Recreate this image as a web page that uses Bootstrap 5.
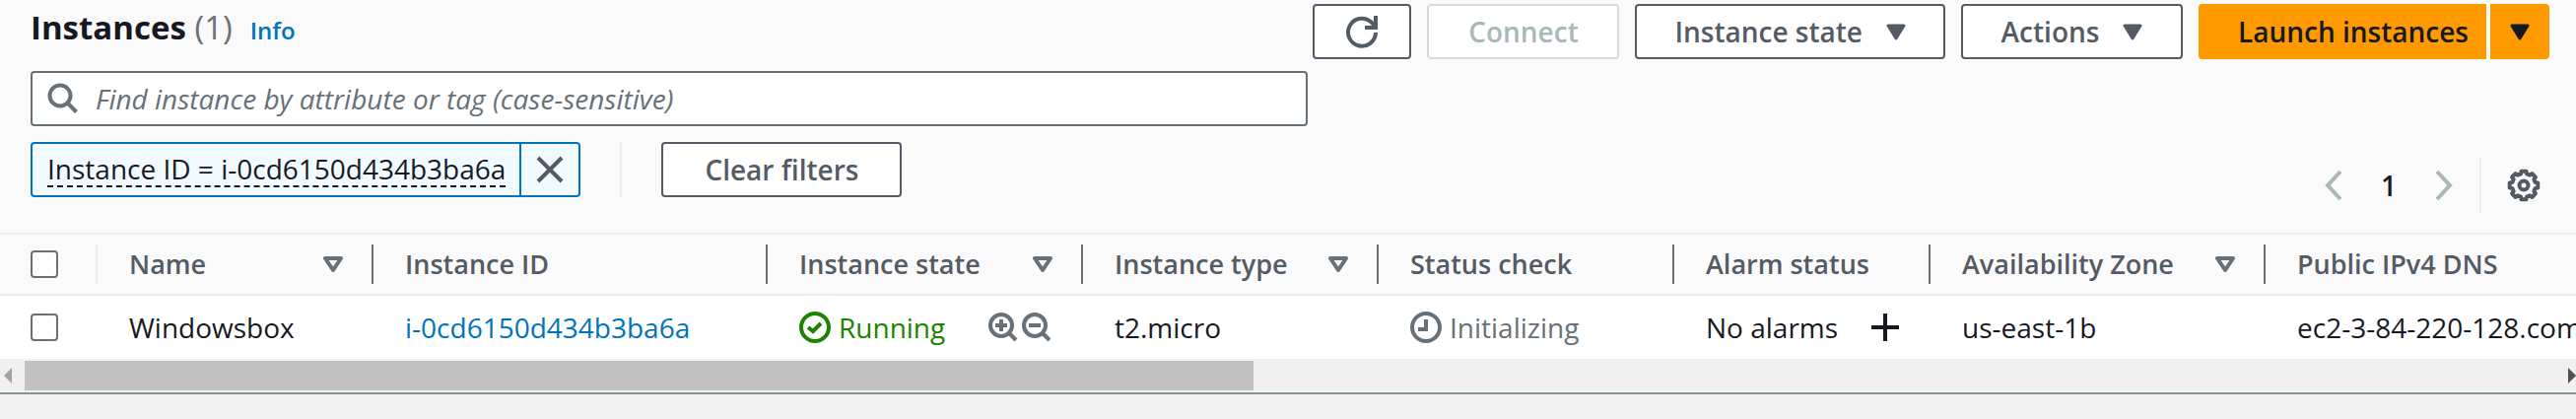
<!DOCTYPE html>
<html lang="en">
<head>
<meta charset="utf-8">
<meta name="viewport" content="width=device-width, initial-scale=1">
<title>Instances</title>
<link rel="stylesheet" href="https://cdn.jsdelivr.net/npm/bootstrap@5.3.0/dist/css/bootstrap.min.css">
<style>
  body { background: #f2f2f2; color: #16191f; font: 400 28px/36px "Open Sans", "Noto Sans", sans-serif; }
  a { color: #0073bb; text-decoration: none; }
  svg { display: block; flex: none; fill: none; stroke: currentColor; }
  .panel { background: #fafafa; border-bottom: 2px solid #879596; }
  .panel-head { padding: 4px 27px 0 31px; }
  .title { font-size: 33px; line-height: 40px; font-weight: 700; }
  .title-count { color: #687078; font-weight: 400; }
  .info { font-size: 24px; font-weight: 600; margin-left: 18px; }

  .btn-console { --bs-btn-font-size: 28px; --bs-btn-font-weight: 600; --bs-btn-line-height: 36px;
    --bs-btn-padding-x: 38px; --bs-btn-padding-y: 8px; --bs-btn-border-width: 2px; --bs-btn-border-radius: 4px;
    --bs-btn-color: #545b64; --bs-btn-bg: #fff; --bs-btn-border-color: #545b64;
    --bs-btn-disabled-color: #aab7b8; --bs-btn-disabled-bg: #fff; --bs-btn-disabled-border-color: #d5dbdb; --bs-btn-disabled-opacity: 1;
    display: flex; align-items: center; justify-content: center; height: 56px; white-space: nowrap; }
  .btn-icon { width: 100px; padding: 0; }
  .btn-launch { --bs-btn-color: #16191f; --bs-btn-bg: #ff9900; --bs-btn-border-color: #ff9900; }
  .btn-launch-main { padding: 0 16px 0 38px; }
  .btn-launch-menu { width: 60px; padding: 0; }
  .caret-gap { gap: 24px; }
  .w-connect { min-width: 195px; }
  .w-state { min-width: 314px; }
  .w-actions { min-width: 225px; }
  .w-launch { min-width: 292px; }
  .w-clear { min-width: 244px; }

  .filters { flex: 0 0 calc(50% + 18px); padding: 12px 0 36px; }
  .search { height: 56px; background: #fff; border: 2px solid #687078; border-radius: 4px; color: #687078; padding-left: 15px; gap: 17px; }
  .search input { border: 0; outline: 0; background: none; font-size: 28px; padding: 0; }
  .search input::placeholder { color: #687078; font-style: italic; opacity: 1; }
  .token { height: 56px; border: 2px solid #0073bb; border-radius: 4px; background: #f1faff; }
  .token-text { border: 0; border-bottom: 2px dashed #16191f; background: none; padding: 0; margin: 8px 14px 0 15px; line-height: 34px; color: #16191f; }
  .token-close { width: 60px; border: 0; border-left: 2px solid #0073bb; background: none; color: #545b64; padding: 0; }
  .rule { width: 2px; height: 56px; background: #eaeded; }
  .rule-filter { margin: 0 40px; }
  .rule-pager { margin: 0 26px; }
  .pager { padding: 0 9px 20px 0; }
  .pager button { border: 0; background: none; padding: 0; }
  .page-step { color: #aab7b8; }
  .page-now { width: 92px; text-align: center; font-weight: 600; color: #16191f; }
  .gear { color: #545b64; }

  .grid-table { table-layout: fixed; margin: 0; border-top: 2px solid #eaeded; color: #16191f; white-space: nowrap; overflow: hidden; }
  .grid-table > :not(caption) > * > * { padding: 0; border: 0; background: none; vertical-align: middle; overflow: hidden; }
  .grid-table thead tr { height: 62px; border-bottom: 2px solid #eaeded; }
  .grid-table tbody tr { height: 65px; background: #fff; }
  .head-cell { height: 40px; padding: 0 29px 0 32px; border-right: 2px solid #687078; color: #545b64; font-size: 27px; font-weight: 600; }
  .head-cell svg { color: #687078; }
  .head-pick { border-color: #eaeded; padding-left: 31px; }
  .head-last { border: 0; padding-right: 0; }
  .body-cell { padding-left: 32px; }
  .body-pick { padding-left: 31px; }
  .tick { appearance: none; display: block; width: 28px; height: 28px; margin: 0; border: 2px solid #687078; border-radius: 4px; background: #fff; }
  .ok { color: #1d8102; }
  .muted { color: #687078; }
  .plain { border: 0; background: none; padding: 0; color: inherit; }
  .col-pick { width: 99px; }
  .col-name { width: 280px; }
  .col-id { width: 400px; }
  .col-state { width: 320px; }
  .col-mid { width: 300px; }
  .col-alarm { width: 260px; }
  .col-zone { width: 340px; }

  .track { height: 34px; background: #f0f0f0; }
  .track svg { stroke: none; fill: #a3a3a3; }
  .track svg.on { fill: #505050; }
  .thumb { width: calc(48% - 4px); height: 30px; background: #c1c1c1; }
</style>
</head>
<body>
<svg class="d-none">
  <symbol id="down" viewBox="0 0 20 17"><path d="M2 2h16l-8 13z" fill="currentColor" stroke-width="3" stroke-linejoin="round"/></symbol>
  <symbol id="sort" viewBox="0 0 20 17"><path d="M2 2h16l-8 12z" stroke-width="4" stroke-linejoin="round"/></symbol>
</svg>
<main class="panel">
  <header class="panel-head d-flex justify-content-between">
    <div class="d-flex align-items-baseline pt-1">
      <h1 class="title mb-0">Instances <span class="title-count">(1)</span></h1>
      <a class="info" href="#">Info</a>
    </div>
    <div class="d-flex gap-3">
      <button class="btn btn-console btn-icon" type="button" aria-label="Refresh">
        <svg width="34" height="34" viewBox="0 0 34 34" stroke-width="4"><path d="M31 18a14 14 0 1 1-5-11l5 5"/><path d="M31 1v12H20"/></svg>
      </button>
      <button class="btn btn-console w-connect" type="button" disabled>Connect</button>
      <button class="btn btn-console caret-gap w-state" type="button">Instance state <svg width="20" height="17"><use href="#down"/></svg></button>
      <button class="btn btn-console caret-gap w-actions" type="button">Actions <svg width="20" height="17"><use href="#down"/></svg></button>
      <div class="d-flex gap-1">
        <button class="btn btn-console btn-launch btn-launch-main w-launch rounded-end-0" type="button">Launch instances</button>
        <button class="btn btn-console btn-launch btn-launch-menu rounded-start-0" type="button" aria-label="More launch options"><svg width="20" height="17"><use href="#down"/></svg></button>
      </div>
    </div>
  </header>

  <section class="panel-head pt-0 d-flex justify-content-between align-items-end">
    <div class="filters">
      <label class="search d-flex align-items-center">
        <svg width="32" height="32" viewBox="0 0 32 32" stroke-width="4"><circle cx="13" cy="13" r="10.5"/><path d="m20.500 20.500 9 9"/></svg>
        <input class="flex-grow-1" type="text" placeholder="Find instance by attribute or tag (case-sensitive)" aria-label="Find instance">
      </label>
      <div class="d-flex mt-3">
        <div class="token d-flex">
          <button class="token-text align-self-start" type="button">Instance ID = i-0cd6150d434b3ba6a</button>
          <button class="token-close d-flex align-items-center justify-content-center" type="button" aria-label="Remove filter">
            <svg width="28" height="28" viewBox="0 0 28 28" stroke-width="4"><path d="m2 2 24 24M26 2 2 26"/></svg>
          </button>
        </div>
        <div class="rule rule-filter"></div>
        <button class="btn btn-console w-clear" type="button">Clear filters</button>
      </div>
    </div>
    <nav class="pager d-flex align-items-center" aria-label="Pages">
      <button class="page-step" type="button" aria-label="Previous page"><svg width="20" height="32" viewBox="0 0 20 32" stroke-width="4"><path d="M17 2 4 16l13 14"/></svg></button>
      <button class="page-now" type="button">1</button>
      <button class="page-step" type="button" aria-label="Next page"><svg width="20" height="32" viewBox="0 0 20 32" stroke-width="4"><path d="m3 2 13 14L3 30"/></svg></button>
      <div class="rule rule-pager"></div>
      <button class="gear" type="button" aria-label="Preferences">
        <svg width="34" height="34" viewBox="0 0 34 34" stroke-width="4" stroke-linejoin="round"><path d="M14.100 5.400 14.400 2.700H19.600L19.900 5.400 23.200 6.700 25.300 5 29 8.700 27.300 10.800 28.600 14.100 31.300 14.400V19.600L28.600 19.900 27.300 23.200 29 25.300 25.300 29 23.200 27.300 19.900 28.600 19.600 31.300H14.400L14.100 28.600 10.800 27.300 8.700 29 5 25.300 6.700 23.200 5.400 19.900 2.700 19.600V14.400L5.400 14.100 6.700 10.800 5 8.700 8.700 5 10.800 6.700z"/><circle cx="17" cy="17" r="4.500"/></svg>
      </button>
    </nav>
  </section>

  <table class="table grid-table">
    <colgroup><col class="col-pick"><col class="col-name"><col class="col-id"><col class="col-state"><col class="col-mid"><col class="col-mid"><col class="col-alarm"><col class="col-zone"><col></colgroup>
    <thead>
      <tr>
        <th scope="col"><div class="head-cell head-pick d-flex align-items-center"><input class="tick" type="checkbox" aria-label="Select all"></div></th>
        <th scope="col"><div class="head-cell d-flex align-items-center justify-content-between">Name <svg width="20" height="17"><use href="#sort"/></svg></div></th>
        <th scope="col"><div class="head-cell d-flex align-items-center">Instance ID</div></th>
        <th scope="col"><div class="head-cell d-flex align-items-center justify-content-between">Instance state <svg width="20" height="17"><use href="#sort"/></svg></div></th>
        <th scope="col"><div class="head-cell d-flex align-items-center justify-content-between">Instance type <svg width="20" height="17"><use href="#sort"/></svg></div></th>
        <th scope="col"><div class="head-cell d-flex align-items-center">Status check</div></th>
        <th scope="col"><div class="head-cell d-flex align-items-center">Alarm status</div></th>
        <th scope="col"><div class="head-cell d-flex align-items-center justify-content-between">Availability Zone <svg width="20" height="17"><use href="#sort"/></svg></div></th>
        <th scope="col"><div class="head-cell head-last d-flex align-items-center">Public IPv4 DNS</div></th>
      </tr>
    </thead>
    <tbody>
      <tr>
        <td><div class="body-pick"><input class="tick" type="checkbox" aria-label="Select Windowsbox"></div></td>
        <td><div class="body-cell">Windowsbox</div></td>
        <td><div class="body-cell"><a href="#">i-0cd6150d434b3ba6a</a></div></td>
        <td>
          <div class="body-cell d-flex align-items-center justify-content-between pe-4">
            <span class="ok d-flex align-items-center gap-2"><svg width="32" height="32" viewBox="0 0 32 32" stroke-width="4"><circle cx="16" cy="16" r="14"/><path d="m9 16 5 4 8-8"/></svg>Running</span>
            <span class="muted d-flex gap-1 pe-2">
              <button class="plain" type="button" aria-label="Include state"><svg width="30" height="30" viewBox="0 0 30 30" stroke-width="4"><circle cx="13" cy="13" r="11"/><path d="m21 21 7 7M7 13h12M13 7v12"/></svg></button>
              <button class="plain" type="button" aria-label="Exclude state"><svg width="30" height="30" viewBox="0 0 30 30" stroke-width="4"><circle cx="13" cy="13" r="11"/><path d="m21 21 7 7M7 13h12"/></svg></button>
            </span>
          </div>
        </td>
        <td><div class="body-cell">t2.micro</div></td>
        <td><div class="body-cell muted d-flex align-items-center gap-2"><svg width="32" height="32" viewBox="0 0 32 32" stroke-width="4"><circle cx="16" cy="16" r="14"/><path d="M16 8v10H8"/></svg>Initializing</div></td>
        <td>
          <div class="body-cell d-flex align-items-center justify-content-between pe-4">No alarms
            <button class="plain pe-2" type="button" aria-label="Add alarm"><svg width="28" height="28" viewBox="0 0 28 28" stroke-width="4"><path d="M14 0v28M0 14h28"/></svg></button>
          </div>
        </td>
        <td><div class="body-cell">us-east-1b</div></td>
        <td><div class="body-cell">ec2-3-84-220-128.com</div></td>
      </tr>
    </tbody>
  </table>
  <div class="track d-flex align-items-center justify-content-between" aria-hidden="true">
    <div class="d-flex align-items-center flex-grow-1">
      <svg class="ms-1 me-2" width="13" height="16" viewBox="0 0 13 16"><path d="M8 0v16L0 8z"/></svg>
      <div class="thumb"></div>
    </div>
    <svg class="on" width="8" height="16" viewBox="0 0 8 16"><path d="M0 0v16l8-8z"/></svg>
  </div>
</main>
<script src="https://cdn.jsdelivr.net/npm/bootstrap@5.3.0/dist/js/bootstrap.bundle.min.js"></script>
</body>
</html>
